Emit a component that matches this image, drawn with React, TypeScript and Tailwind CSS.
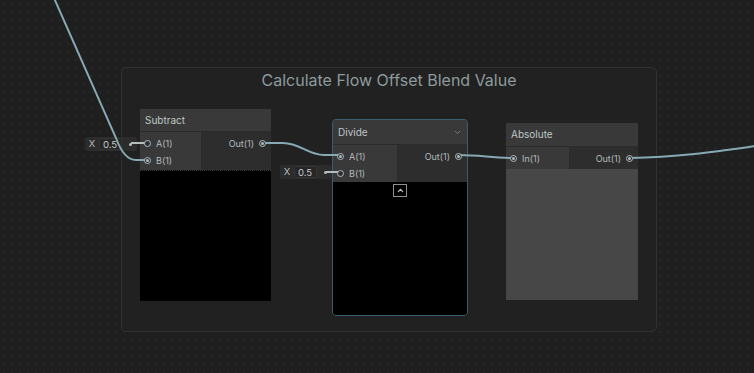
import React from "react";
import { ChevronDown, ChevronUp } from "lucide-react";

type PortProps = { connected?: boolean };

function Port({ connected }: PortProps) {
  return (
    <span className="relative z-20 flex items-center justify-center w-[7px] h-[7px] rounded-full border border-[#aebcc2] bg-[#2f2f2f]">
      {connected && <span className="w-[3px] h-[3px] rounded-full bg-[#aebcc2]" />}
    </span>
  );
}

function InRow({ label, connected }: { label: string; connected?: boolean }) {
  return (
    <div className="flex items-center h-[17px] pl-[4px] gap-[5px]">
      <Port connected={connected} />
      <span className="text-[9px] text-[#b4bcbd]">{label}</span>
    </div>
  );
}

function OutRow({ label }: { label: string }) {
  return (
    <div className="flex items-center justify-end h-[17px] pr-[5px] gap-[5px]">
      <span className="text-[9px] text-[#b4bcbd]">{label}</span>
      <Port connected />
    </div>
  );
}

function ValueField({ className }: { className: string }) {
  return (
    <div className={`absolute flex items-center h-[14px] w-[52px] bg-[#2c2c2c] rounded-[2px] ${className}`}>
      <span className="w-[14px] text-center text-[9.5px] text-[#b4bcbd]">X</span>
      <span className="w-[23px] h-[12px] leading-[11px] pl-[3px] text-[9.5px] text-[#c4cacb] bg-[#262626] border border-[#353535] rounded-[2px]">0.5</span>
      <span className="ml-[7px] w-[3px] h-[3px] rounded-full bg-[#b4bcbd]" />
    </div>
  );
}

export default function App() {
  return (
    <div
      className="relative w-[754px] h-[373px] overflow-hidden bg-[#1f1f1f] bg-[radial-gradient(circle,#262626_0.8px,transparent_1px)] bg-[length:8px_8px]"
      style={{ fontFamily: "Inter, 'Noto Sans', sans-serif" }}
    >
      {/* group */}
      <div className="absolute left-[121px] top-[67px] w-[536px] h-[265px] rounded-[5px] border border-[#303030] bg-[#212121]">
        <div className="text-center text-[16px] text-[#8d9b9c]">Calculate Flow Offset Blend Value</div>
      </div>

      <ValueField className="left-[85px] top-[137px]" />
      <ValueField className="left-[280px] top-[165px]" />

      {/* Subtract */}
      <div className="absolute left-[140px] top-[109px] w-[131px]">
        <div className="h-[23px] flex items-center px-[5px] bg-[#393939] border-b border-[#2b2b2b] text-[10px] text-[#bfc6c7]">Subtract</div>
        <div className="flex h-[38px]">
          <div className="w-[61px] bg-[#393939] pt-[3px]">
            <InRow label="A(1)" />
            <InRow label="B(1)" connected />
          </div>
          <div className="flex-1 bg-[#2d2d2d] pt-[3px]">
            <OutRow label="Out(1)" />
          </div>
        </div>
        <div className="h-[131px] bg-black border-t border-dotted border-[#3a3a3a]" />
      </div>

      {/* Divide */}
      <div className="absolute left-[332px] top-[119px] w-[136px] rounded-[4px] border border-[#385f6e] overflow-hidden">
        <div className="h-[25px] flex items-center justify-between px-[5px] bg-[#393939] border-b border-[#2b2b2b] text-[10px] text-[#bfc6c7]">
          <span>Divide</span>
          <ChevronDown size={9} color="#8a8f90" />
        </div>
        <div className="flex h-[37px]">
          <div className="w-[64px] bg-[#393939] pt-[3px]">
            <InRow label="A(1)" connected />
            <InRow label="B(1)" />
          </div>
          <div className="flex-1 bg-[#2d2d2d] pt-[3px]">
            <OutRow label="Out(1)" />
          </div>
        </div>
        <div className="h-[133px] bg-black flex justify-center pt-[2px]">
          <div className="w-[14px] h-[13px] border border-[#8a8f90] flex items-center justify-center">
            <ChevronUp size={9} color="#c0c6c7" strokeWidth={3} />
          </div>
        </div>
      </div>

      {/* Absolute */}
      <div className="absolute left-[506px] top-[123px] w-[132px]">
        <div className="h-[24px] flex items-center px-[5px] bg-[#393939] border-b border-[#2b2b2b] text-[10px] text-[#bfc6c7]">Absolute</div>
        <div className="flex h-[22px]">
          <div className="w-[63px] bg-[#393939] pt-[3px]">
            <InRow label="In(1)" connected />
          </div>
          <div className="flex-1 bg-[#2d2d2d] pt-[3px]">
            <OutRow label="Out(1)" />
          </div>
        </div>
        <div className="h-[131px] bg-[#474747]" />
      </div>

      {/* wires */}
      <svg className="absolute inset-0 z-10 pointer-events-none" width="754" height="373">
        <g fill="none" stroke="#86a9b3" strokeWidth="2">
          <path d="M54 -2 L116 138 Q124 160 136 160 L148 160" />
          <path d="M263 143 L283 143 C300 143 308 155 324 155 L341 155" />
          <path d="M458 155 C482 155 490 158 513 158" />
          <path d="M630 158 C680 157 720 151 756 146" />
        </g>
        <g fill="none" stroke="#b4bcbd" strokeWidth="2">
          <path d="M131 143 L146 143" />
          <path d="M326 172 L340 172" />
        </g>
      </svg>
    </div>
  );
}
